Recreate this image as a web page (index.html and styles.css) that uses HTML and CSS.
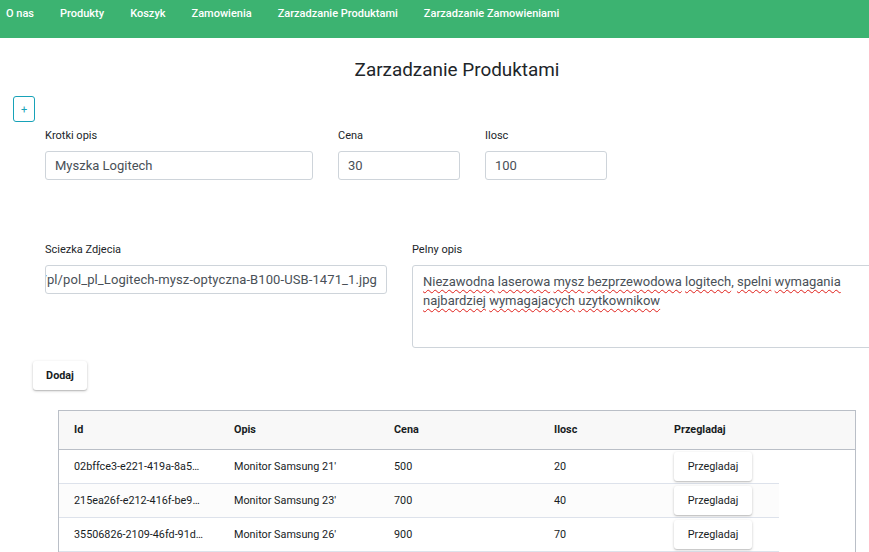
FILE: index.html
```html
<!DOCTYPE html>
<html lang="pl">
<head>
<meta charset="utf-8">
<title>Zarzadzanie Produktami</title>
<link rel="stylesheet" href="styles.css">
</head>
<body>
<nav class="topnav">
  <a href="#">O nas</a>
  <a href="#">Produkty</a>
  <a href="#">Koszyk</a>
  <a href="#">Zamowienia</a>
  <a href="#">Zarzadzanie Produktami</a>
  <a href="#">Zarzadzanie Zamowieniami</a>
</nav>
<main class="page">
  <h1 class="title">Zarzadzanie Produktami</h1>
  <button class="add-btn" type="button">+</button>

  <div class="form-row row-main">
    <div class="field">
      <label>Krotki opis</label>
      <input class="input w-name" type="text" value="Myszka Logitech">
    </div>
    <div class="field">
      <label>Cena</label>
      <input class="input w-small" type="text" value="30">
    </div>
    <div class="field">
      <label>Ilosc</label>
      <input class="input w-small" type="text" value="100">
    </div>
  </div>

  <div class="form-row row-extra">
    <div class="field">
      <label>Sciezka Zdjecia</label>
      <div class="input input-fake w-path"><span>https://img.sklep.com/pl/pol_pl_Logitech-mysz-optyczna-B100-USB-1471_1.jpg</span></div>
    </div>
    <div class="field">
      <label>Pelny opis</label>
      <div class="textarea"><span class="sp">Niezawodna</span> <span class="sp">laserowa</span> <span class="sp">mysz</span> <span class="sp">bezprzewodowa</span> <span class="sp">logitech</span>, <span class="sp">spelni</span> <span class="sp">wymagania</span><br><span class="sp">najbardziej</span> <span class="sp">wymagajacych</span> <span class="sp">uzytkownikow</span></div>
    </div>
  </div>

  <button class="submit-btn" type="button">Dodaj</button>

  <div class="grid">
    <div class="grid-header">
      <div class="hcell">Id</div>
      <div class="hcell">Opis</div>
      <div class="hcell">Cena</div>
      <div class="hcell">Ilosc</div>
      <div class="hcell">Przegladaj</div>
    </div>
    <div class="grid-row">
      <div class="cell">02bffce3-e221-419a-8a56-1c4d2e7f9b30</div>
      <div class="cell">Monitor Samsung 21'</div>
      <div class="cell">500</div>
      <div class="cell">20</div>
      <div class="cell cell-btn"><button class="view-btn" type="button">Przegladaj</button></div>
    </div>
    <div class="grid-row odd">
      <div class="cell">215ea26f-e212-416f-be94-77a0c3d12e58</div>
      <div class="cell">Monitor Samsung 23'</div>
      <div class="cell">700</div>
      <div class="cell">40</div>
      <div class="cell cell-btn"><button class="view-btn" type="button">Przegladaj</button></div>
    </div>
    <div class="grid-row">
      <div class="cell">35506826-2109-46fd-91d2-5be3a0f4c611</div>
      <div class="cell">Monitor Samsung 26'</div>
      <div class="cell">900</div>
      <div class="cell">70</div>
      <div class="cell cell-btn"><button class="view-btn" type="button">Przegladaj</button></div>
    </div>
  </div>
</main>
</body>
</html>
```
FILE: styles.css
```css
* { box-sizing: border-box; }
html, body { margin: 0; padding: 0; overflow: hidden; }
body {
  width: 914px;
  font-family: Roboto, "Liberation Sans", sans-serif;
  color: #212529;
  background: #fff;
}

.topnav {
  height: 38px;
  background: #3cb371;
  display: flex;
  gap: 26px;
  padding: 7px 0 0 6px;
}
.topnav a {
  color: #fff;
  font-size: 11px;
  font-weight: 500;
  line-height: 14px;
  text-decoration: none;
}

.title {
  margin: 21px 0 0;
  font-size: 18.9px;
  font-weight: 400;
  line-height: 22px;
  text-align: center;
  color: #212529;
}

.add-btn {
  display: block;
  margin: 15px 0 0 13px;
  width: 22px;
  height: 26px;
  padding: 0;
  border: 1px solid #17a2b8;
  border-radius: 3px;
  background: #fff;
  color: #17a2b8;
  font-family: inherit;
  font-size: 11px;
  line-height: 1;
}

.form-row {
  display: flex;
  gap: 25px;
  margin-left: 45px;
}
.row-main { margin-top: 7px; }
.row-extra { margin-top: 63px; }

.field label {
  display: block;
  font-size: 11px;
  line-height: 14px;
  margin-bottom: 8px;
  color: #212529;
}

.input {
  display: block;
  height: 29px;
  border: 1px solid #ced4da;
  border-radius: 3px;
  padding: 0 9px;
  font-family: inherit;
  font-size: 13px;
  color: #495057;
  background: #fff;
  outline: none;
}
.w-name { width: 268px; }
.w-small { width: 122px; }
.w-path { width: 342px; }

.input-fake {
  display: flex;
  align-items: center;
  justify-content: flex-end;
  overflow: hidden;
  white-space: nowrap;
  letter-spacing: 0.1px;
}
.input-fake span { flex: none; }

.textarea {
  width: 480px;
  height: 83px;
  border: 1px solid #ced4da;
  border-radius: 3px;
  padding: 6px 10px;
  font-size: 13px;
  line-height: 19px;
  color: #495057;
  white-space: nowrap;
}
.sp {
  text-decoration: underline wavy #e0201a;
  text-decoration-thickness: 1px;
  text-underline-offset: 3px;
}

.submit-btn {
  display: block;
  margin: 13px 0 0 33px;
  width: 54px;
  height: 29px;
  border: none;
  border-radius: 3px;
  background: #fff;
  box-shadow: 0 1px 3px rgba(0, 0, 0, 0.22), 0 1px 1px rgba(0, 0, 0, 0.12);
  font-family: inherit;
  font-size: 10.8px;
  font-weight: 700;
  color: #181d1f;
  padding: 0;
}

.grid {
  margin: 20px 0 0 58px;
  width: 798px;
  height: 200px;
  border: 1px solid #babfc7;
  border-bottom: none;
  color: #181d1f;
  font-size: 10.8px;
}
.grid-header {
  display: grid;
  grid-template-columns: 160px 160px 160px 120px 120px;
  height: 39px;
  background: #f8f8f8;
  border-bottom: 1px solid #babfc7;
}
.hcell {
  padding: 0 15px;
  line-height: 38px;
  font-weight: 700;
}
.grid-row {
  display: grid;
  grid-template-columns: 160px 160px 160px 120px 120px;
  width: 720px;
  height: 34px;
  border-bottom: 1px solid #dde2eb;
  background: #fff;
}
.grid-row.odd { background: #fcfcfc; }
.cell {
  padding: 0 15px;
  line-height: 33px;
  white-space: nowrap;
  overflow: hidden;
  text-overflow: ellipsis;
}
.cell-btn {
  display: flex;
  align-items: center;
  overflow: visible;
}
.view-btn {
  width: 78px;
  height: 29px;
  border: none;
  border-radius: 3px;
  background: #fff;
  box-shadow: 0 1px 3px rgba(0, 0, 0, 0.2), 0 1px 1px rgba(0, 0, 0, 0.1);
  font-family: inherit;
  font-size: 10.8px;
  color: #181d1f;
  padding: 0;
}
```
